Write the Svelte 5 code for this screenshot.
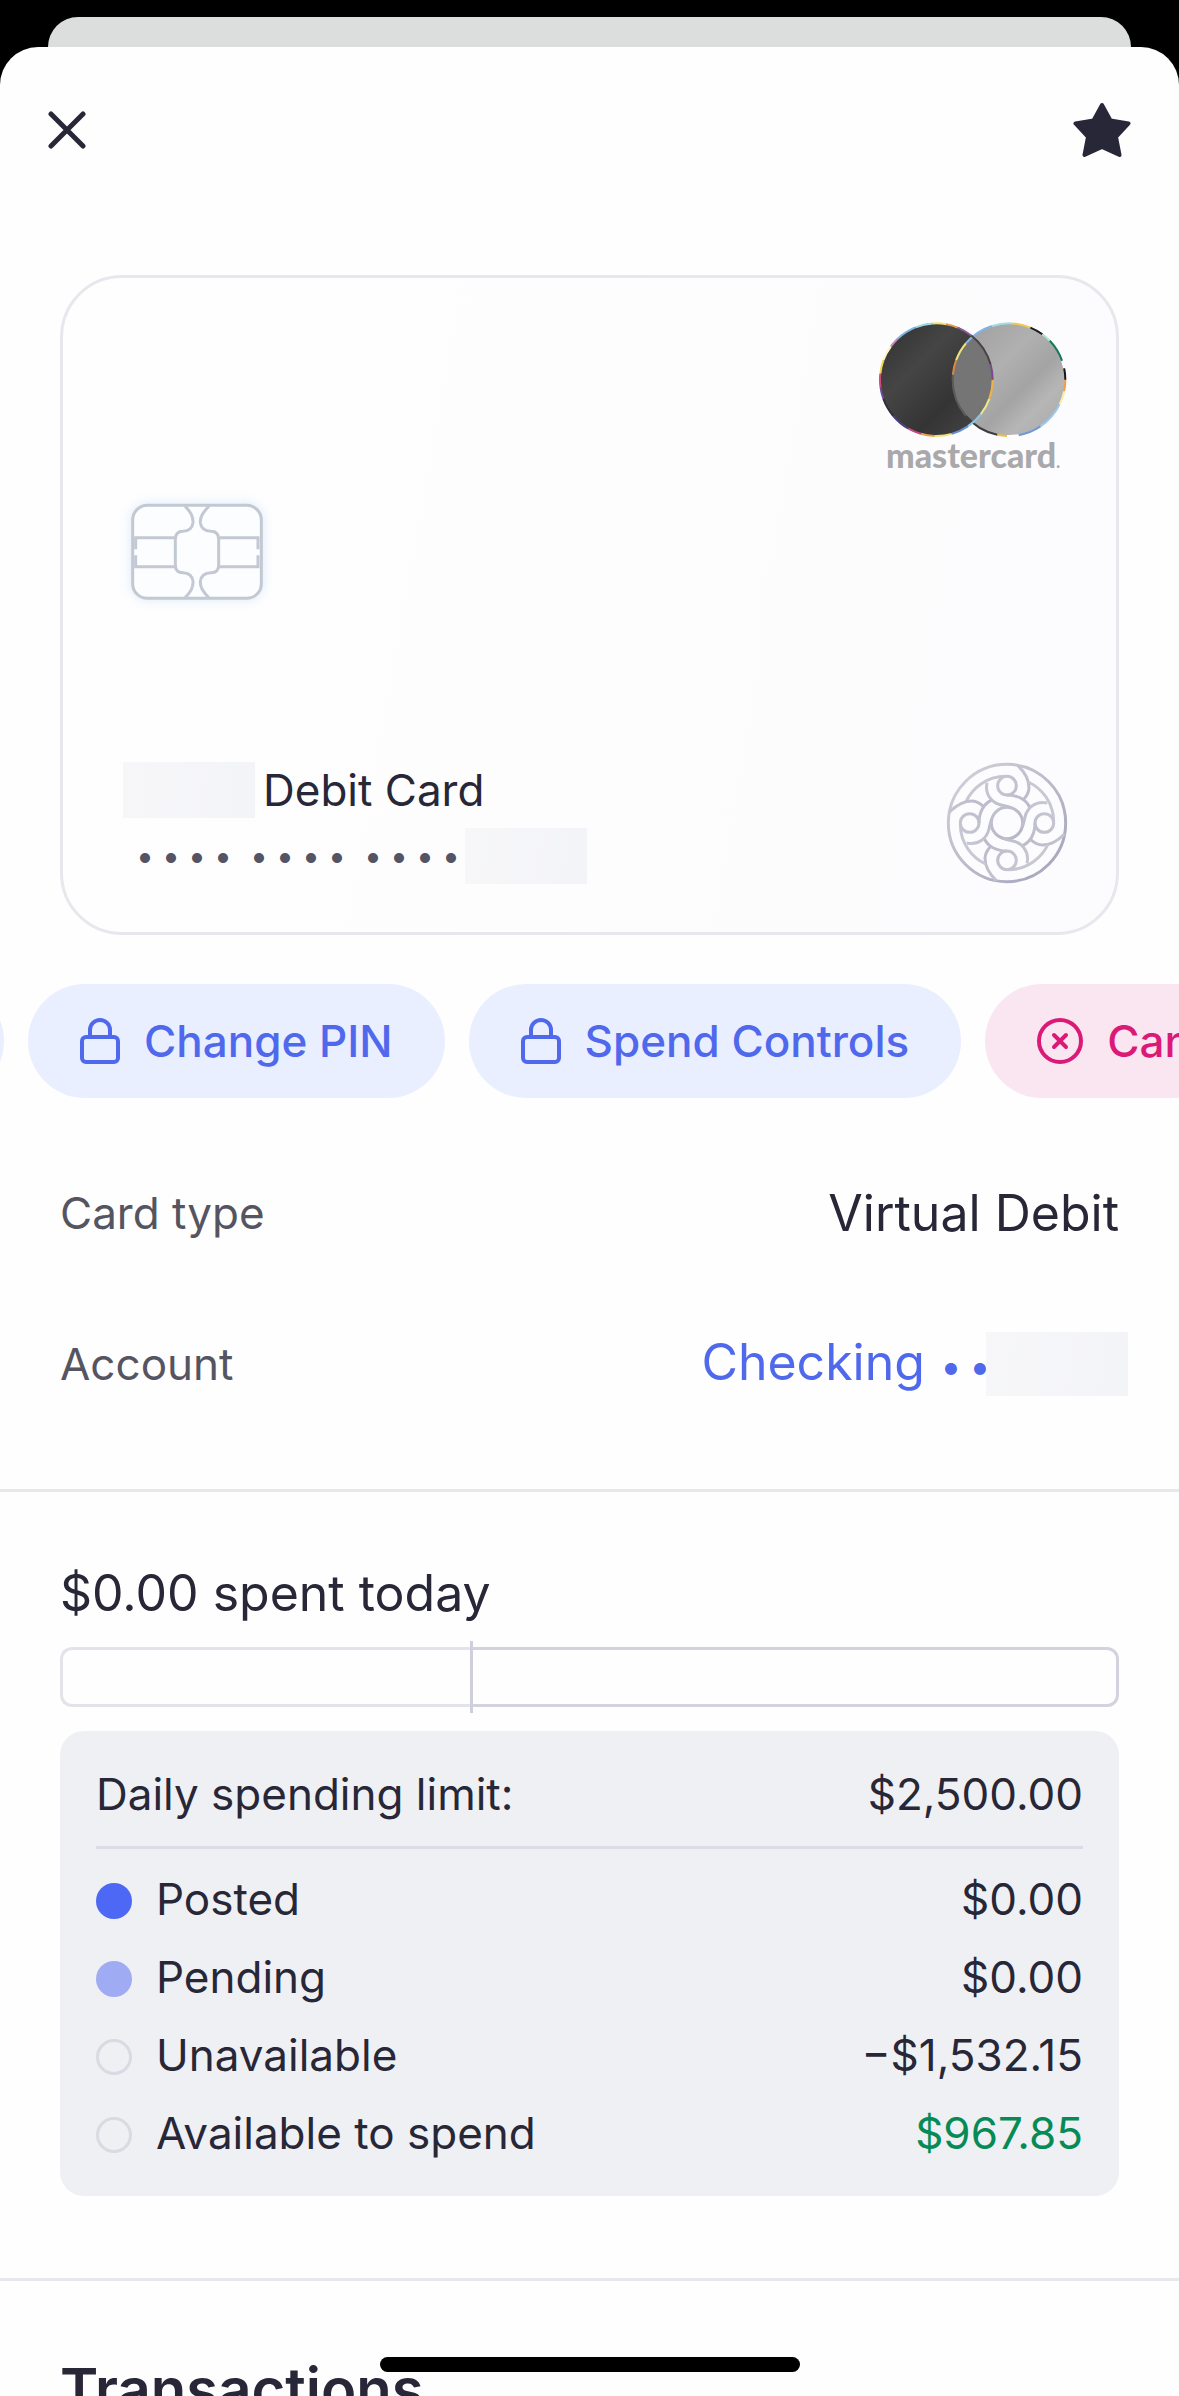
<script lang="ts">
	type Tone = 'blue' | 'pink';
	type Arc = [start: number, length: number, color: string];

	const actions: { label: string; icon: 'lock' | 'cancel'; tone: Tone }[] = [
		{ label: 'Change PIN', icon: 'lock', tone: 'blue' },
		{ label: 'Spend Controls', icon: 'lock', tone: 'blue' },
		{ label: 'Cancel Card', icon: 'cancel', tone: 'pink' }
	];

	const rows = [
		{ label: 'Posted', amount: '$0.00', kind: 'posted' },
		{ label: 'Pending', amount: '$0.00', kind: 'pending' },
		{ label: 'Unavailable', amount: '−$1,532.15', kind: 'empty' },
		{ label: 'Available to spend', amount: '$967.85', kind: 'available' }
	];

	// $967.85 of $2,500.00 is still free
	const limit = 2500;
	const available = 967.85;
	const marker = (available / limit) * 100;

	// Holographic rims, in degrees clockwise from 3 o'clock
	const leftRim: Arc[] = [
		[0, 20, '#f0b04a'], [20, 18, '#efe98a'], [38, 18, '#86c8e8'], [56, 18, '#6a8fd0'],
		[74, 18, '#f3e27a'], [92, 14, '#e8a04c'], [106, 14, '#c24a86'], [120, 20, '#47407a'],
		[140, 20, '#2f2f3c'], [160, 12, '#6b4a9c'], [172, 14, '#cf4a78'], [186, 14, '#f0d85a'],
		[200, 16, '#fff6c8'], [216, 10, '#c98ac0'], [226, 22, '#7db4e4'], [248, 18, '#9fd8e0'],
		[266, 14, '#f2e36a'], [280, 12, '#e89a4a'], [292, 16, '#8a5a9a'], [308, 36, '#4a4048'],
		[344, 16, '#7a4a8a']
	];

	const rightRim: Arc[] = [
		[0, 12, '#f0a04a'], [12, 14, '#f6f0a0'], [26, 30, '#9cc8ee'], [56, 24, '#6f9ad8'],
		[80, 12, '#ffffff'], [92, 10, '#eac04c'], [102, 38, '#3e3e40'], [140, 45, '#5a5a5a'],
		[185, 15, '#d9883c'], [200, 20, '#ece27a'], [220, 32, '#7fb4e6'], [252, 20, '#a6dce4'],
		[272, 20, '#f0c85a'], [292, 14, '#1c1c1c'], [306, 10, '#b8e0d0'], [316, 24, '#17795a'],
		[340, 8, '#ffffff'], [348, 12, '#161616']
	];
</script>

{#snippet rim(cx: number, cy: number, arcs: Arc[])}
	{#each arcs as [start, length, color]}
		<circle
			{cx} {cy} r="169" fill="none" stroke={color} stroke-width="6"
			pathLength="360" stroke-dasharray="{length} {360 - length}" stroke-dashoffset={-start}
		/>
	{/each}
{/snippet}

{#snippet masked(groups: number, size: number)}
	<span class="mask">
		{#each Array(groups) as _}
			<span class="mask-group">{#each Array(size) as _}<span>•</span>{/each}</span>
		{/each}
	</span>
{/snippet}

<div class="screen">
	<div class="sheet-behind"></div>

	<main class="sheet">
		<header class="topbar">
			<button class="icon-btn" aria-label="Close">
				<svg width="38" height="38" viewBox="0 0 38 38" fill="none" stroke="currentColor" stroke-width="5" stroke-linecap="round">
					<path d="M3 3 35 35M35 3 3 35" />
				</svg>
			</button>
			<button class="icon-btn" aria-label="Favorite">
				<svg width="58" height="56" viewBox="0 0 58 56" fill="currentColor" stroke="currentColor" stroke-width="4" stroke-linejoin="round">
					<path d="M29 3 37.500 18.500 55.500 21.500 43 35 46.500 53 29 45 11.500 53 15 35 2.500 21.500 20.500 18.500Z" />
				</svg>
			</button>
		</header>

		<section class="card" aria-label="Debit card">
			<div class="network">
				<svg width="190" height="118" viewBox="114 64 570 354" role="img" aria-label="Mastercard">
					<defs>
						<linearGradient id="mc-dark" x1="0" y1="0" x2="1" y2="1">
							<stop offset="0" stop-color="#303030" />
							<stop offset="0.35" stop-color="#454545" />
							<stop offset="0.65" stop-color="#343434" />
							<stop offset="1" stop-color="#4a4a4a" />
						</linearGradient>
						<linearGradient id="mc-light" x1="0" y1="0" x2="1" y2="1">
							<stop offset="0" stop-color="#9c9c9c" />
							<stop offset="0.4" stop-color="#b0b0b0" />
							<stop offset="0.6" stop-color="#a4a4a4" />
							<stop offset="0.75" stop-color="#b6b6b6" />
							<stop offset="1" stop-color="#a6a6a6" />
						</linearGradient>
						<clipPath id="mc-left"><circle cx="289" cy="240" r="170" /></clipPath>
					</defs>
					<circle cx="289" cy="240" r="170" fill="url(#mc-dark)" />
					<circle cx="507" cy="240" r="170" fill="url(#mc-light)" />
					<circle cx="507" cy="240" r="170" fill="#757575" clip-path="url(#mc-left)" />
					{@render rim(507, 240, rightRim)}
					{@render rim(289, 240, leftRim)}
				</svg>
				<span class="network-name">mastercard<small>.</small></span>
			</div>

			<svg class="chip" width="180" height="140" viewBox="0 0 540 420" fill="none" stroke="#c2c9d3" stroke-width="9">
				<rect x="71" y="76" width="386" height="279" rx="44" fill="#fcfdff" />
				<path d="M228 78C246 98 253 110 252 128 250 144 240 153 222 154 206 154 199 162 199 178V254C199 270 206 278 222 278 240 279 250 288 252 304 253 322 246 334 228 354" />
				<path d="M300 78C282 98 273 110 274 128 276 144 286 153 306 154 322 154 329 162 329 178V254C329 270 322 278 306 278 286 279 276 288 274 304 273 322 282 334 300 354" />
				<path d="M199 173H80V208M199 260H80V226M329 173H447V208M329 260H447V226" />
			</svg>

			<div class="card-foot">
				<div class="card-text">
					<div class="card-name"><span class="redacted name-block"></span><span>Debit Card</span></div>
					<div class="card-number">{@render masked(3, 4)}<span class="redacted number-block"></span></div>
				</div>
				<svg width="122" height="122" viewBox="-183 -183 366 366" fill="none" stroke="url(#emblem-ink)" stroke-width="9">
					<defs>
						<linearGradient id="emblem-ink" gradientUnits="userSpaceOnUse" x1="-130" y1="-130" x2="130" y2="130">
							<stop offset="0" stop-color="#cdcdd6" />
							<stop offset="1" stop-color="#a9a9bf" />
						</linearGradient>
					</defs>
					<circle r="176" />
					<circle r="47" />
					{#each [0, 90, 180, 270] as angle}
						<g transform="rotate({angle})">
							<circle cy="-112" r="28" />
							<path d="M-123 -64C-104 -104 -62 -140 -4 -140" />
							<path d="M32 -173C54 -152 66 -128 66 -106 66 -92 60 -82 50 -71" />
							<path d="M-60 -121C-68 -84 -44 -60 -18 -54 -4 -51 4 -50 14 -45" />
							<path d="M0 -84C32 -84 58 -70 68 -47" />
						</g>
					{/each}
				</svg>
			</div>
		</section>

		<nav class="actions" aria-label="Card actions">
			<button class="pill blue scrolled" aria-label="Previous action"></button>
			{#each actions as { label, icon, tone }}
				<button class="pill {tone}">
					{#if icon === 'lock'}
						<svg width="40" height="46" viewBox="0 0 40 46" fill="none" stroke="currentColor" stroke-width="4">
							<rect x="2" y="19" width="36" height="25" rx="4" />
							<path d="M10 19V12a10 10 0 0 1 20 0V19" />
						</svg>
					{:else}
						<svg width="46" height="46" viewBox="0 0 46 46" fill="none" stroke="currentColor" stroke-width="4" stroke-linecap="round">
							<circle cx="23" cy="23" r="21" />
							<path d="M17 17 29 29M29 17 17 29" />
						</svg>
					{/if}
					<span>{label}</span>
				</button>
			{/each}
		</nav>

		<dl class="details">
			<div class="detail">
				<dt>Card type</dt>
				<dd>Virtual Debit</dd>
			</div>
			<div class="detail">
				<dt>Account</dt>
				<dd class="account"><a href="#account">Checking {@render masked(1, 2)}</a><span class="redacted account-block"></span></dd>
			</div>
		</dl>

		<section class="spending">
			<h2>$0.00 spent today</h2>
			<div class="meter">
				<div class="meter-free" style:width="{marker}%"></div>
				<div class="meter-held"></div>
			</div>

			<div class="summary">
				<table>
					<thead>
						<tr><th scope="row">Daily spending limit:</th><td>$2,500.00</td></tr>
					</thead>
					<tbody>
						{#each rows as { label, amount, kind }}
							<tr class={kind}>
								<th scope="row"><span class="dot"></span>{label}</th>
								<td>{amount}</td>
							</tr>
						{/each}
					</tbody>
				</table>
			</div>
		</section>

		<section class="transactions">
			<h2>Transactions</h2>
		</section>
	</main>

	<div class="home-indicator"></div>
</div>

<style>
	:global(body) {
		margin: 0;
		background: #000;
	}

	.screen {
		--ink: #282737;
		--muted: #555562;
		--blue: #5069ec;
		--line: #e8e8ec;

		box-sizing: border-box;
		display: flex;
		flex-direction: column;
		height: 100vh;
		padding-top: 17px;
		overflow: hidden;
		background: #000;
		color: var(--ink);
		font-family: Inter, "Liberation Sans", sans-serif;
		font-size: 44px;
		line-height: 56px;
	}

	button {
		padding: 0;
		border: 0;
		background: none;
		color: inherit;
		font: inherit;
		cursor: pointer;
	}

	svg {
		display: block;
		flex-shrink: 0;
	}

	h2, dl, dd {
		margin: 0;
	}

	/* ── Sheets ── */
	.sheet-behind {
		flex-shrink: 0;
		height: 30px;
		margin: 0 48px;
		border-radius: 30px 30px 0 0;
		background: #dcdedd;
	}

	.sheet {
		flex: 1;
		min-height: 0;
		overflow: hidden auto;
		scrollbar-width: none;
		border-radius: 38px 38px 0 0;
		background: #fefefe;
	}

	.topbar {
		display: flex;
		justify-content: space-between;
		align-items: center;
		height: 166px;
		padding: 0 48px;
	}

	.icon-btn {
		display: flex;
	}

	/* ── Card ── */
	.card {
		box-sizing: border-box;
		display: flex;
		flex-direction: column;
		height: 660px;
		margin: 62px 60px 0;
		padding: 43px 48px 48px 60px;
		border: 3px solid #e7e7ed;
		border-radius: 62px;
		background: linear-gradient(100deg, #fefefe, #fcfcfe);
	}

	.network {
		align-self: flex-end;
		display: flex;
		flex-direction: column;
		align-items: center;
	}

	.network-name {
		color: #a9a9ab;
		font-family: Lato, sans-serif;
		font-size: 34px;
		font-weight: 900;
		line-height: 32px;
	}

	.network-name small {
		font-size: 16px;
	}

	.chip {
		margin: 2px 0 0 -14px;
		filter: drop-shadow(0 0 6px #dfeafa);
	}

	.card-foot {
		display: flex;
		justify-content: space-between;
		align-items: flex-end;
		margin-top: auto;
	}

	.card-name,
	.card-number {
		display: flex;
		align-items: center;
		gap: 8px;
		height: 56px;
	}

	.card-number {
		margin-top: 10px;
		padding-left: 16px;
		color: #555464;
	}

	.redacted {
		flex-shrink: 0;
		background: linear-gradient(100deg, #f7f7f9, #f3f4f8);
	}

	.name-block {
		width: 132px;
		height: 56px;
	}

	.number-block {
		width: 122px;
		height: 56px;
	}

	.account-block {
		width: 142px;
		height: 64px;
	}

	.mask {
		display: inline-flex;
		gap: 24px;
		font-size: 32px;
	}

	.mask-group {
		display: flex;
		gap: 14px;
	}

	.mask-group span {
		display: flex;
		justify-content: center;
		width: 12px;
	}

	/* ── Actions ── */
	.actions {
		display: flex;
		gap: 24px;
		margin-top: 49px;
		overflow: hidden;
	}

	.pill {
		flex-shrink: 0;
		display: flex;
		align-items: center;
		gap: 24px;
		height: 114px;
		padding: 0 52px;
		border-radius: 57px;
		font-weight: 500;
		white-space: nowrap;
	}

	.pill.blue {
		background: #eaefff;
		color: var(--blue);
	}

	.pill.pink {
		background: #fae6f0;
		color: #db1a78;
	}

	.pill.scrolled {
		width: 200px;
		margin-left: -196px;
	}

	/* ── Details ── */
	.details {
		padding: 75px 60px 85px;
		border-bottom: 3px solid var(--line);
	}

	.detail {
		display: flex;
		justify-content: space-between;
		align-items: center;
		height: 80px;
	}

	.detail + .detail {
		margin-top: 71px;
	}

	.detail dt {
		color: var(--muted);
	}

	.detail dd {
		font-size: 50px;
	}

	.detail .account {
		display: flex;
		align-items: center;
		margin-right: -9px;
	}

	.account a {
		color: var(--blue);
		text-decoration: none;
	}

	.account .mask {
		margin-left: 6px;
		font-size: 38px;
	}

	.account .mask-group {
		gap: 17px;
	}

	/* ── Spending ── */
	.spending {
		padding: 69px 60px 82px;
		border-bottom: 3px solid var(--line);
	}

	.spending h2 {
		font-size: 50px;
		font-weight: 400;
		line-height: 64px;
	}

	.meter {
		position: relative;
		display: flex;
		height: 60px;
		margin-top: 22px;
	}

	.meter-free,
	.meter-held {
		box-sizing: border-box;
		border: 3px solid #e3e3ea;
	}

	.meter-free {
		border-right: 0;
		border-radius: 12px 0 0 12px;
	}

	.meter-held {
		flex: 1;
		border-color: #d3d2df;
		border-left: 0;
		border-radius: 0 12px 12px 0;
	}

	/* Tick that runs past the meter on both sides */
	.meter-held::before {
		content: '';
		position: absolute;
		top: -6px;
		bottom: -6px;
		width: 3px;
		background: #cfcedd;
	}

	.summary {
		margin-top: 24px;
		padding: 24px 36px;
		border-radius: 24px;
		background: #eff0f3;
	}

	table {
		width: 100%;
		border-collapse: collapse;
	}

	th, td {
		height: 78px;
		padding: 0;
		font-weight: 400;
	}

	th {
		text-align: left;
	}

	td {
		text-align: right;
	}

	thead th,
	thead td {
		height: 92px;
		border-bottom: 3px solid #dadce8;
		padding-bottom: 12px;
		box-sizing: border-box;
	}

	tbody::before {
		content: '';
		display: block;
		height: 11px;
	}

	.dot {
		box-sizing: border-box;
		display: inline-block;
		width: 36px;
		height: 36px;
		margin-right: 24px;
		border: 3px solid #d9dae3;
		border-radius: 50%;
		vertical-align: -4px;
	}

	.posted .dot {
		border: 0;
		background: #4d68f5;
	}

	.pending .dot {
		border: 0;
		background: #9fabf2;
	}

	.available td {
		color: #078b56;
	}

	.transactions {
		padding: 72px 60px;
	}

	.transactions h2 {
		font-size: 58px;
		font-weight: 600;
		line-height: 72px;
	}

	.home-indicator {
		position: fixed;
		bottom: 24px;
		left: 50%;
		width: 420px;
		height: 15px;
		border-radius: 8px;
		background: #000;
		transform: translateX(-50%);
	}
</style>
